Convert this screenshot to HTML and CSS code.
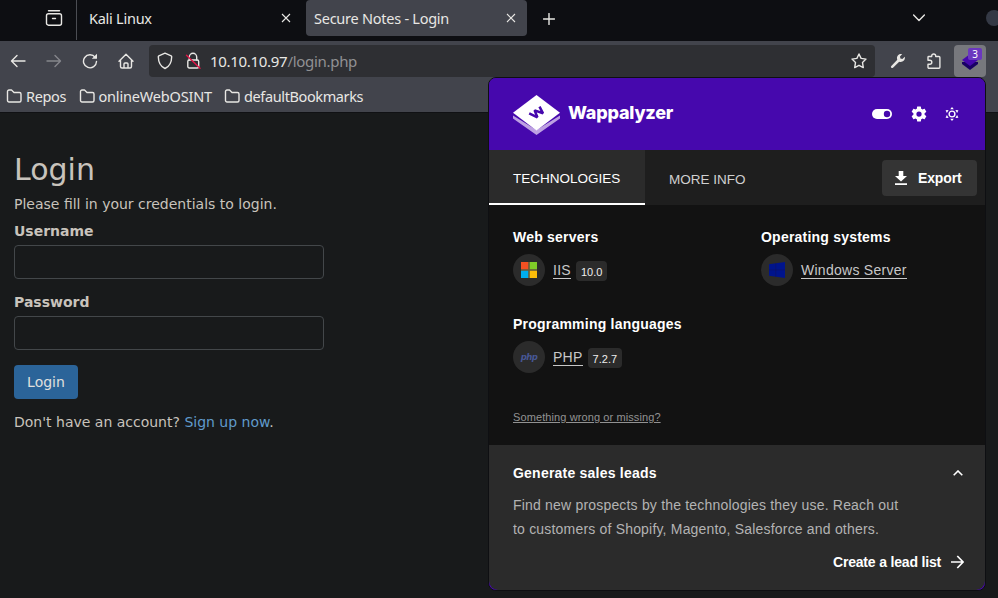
FILE: index.html
```html
<!DOCTYPE html>
<html lang="en">
<head>
<meta charset="utf-8">
<title>Secure Notes - Login</title>
<link rel="stylesheet" href="styles.css">
</head>
<body>
<div class="browser">
  <header class="tabs">
    <div class="view-button">
      <svg width="18" height="18" viewBox="0 0 18 18" class="line"><path d="M3.500 1.700h11"/><rect x="1.500" y="4.700" width="15" height="11.500" rx="2"/><path d="M7.500 9.500h3"/></svg>
    </div>
    <div class="tab tab-idle"><span class="tab-name">Kali Linux</span>
      <svg width="10" height="10" viewBox="0 0 10 10" class="thin"><path d="M1 1l8 8M9 1l-8 8"/></svg>
    </div>
    <div class="tab tab-active"><span class="tab-name">Secure Notes - Login</span>
      <svg width="10" height="10" viewBox="0 0 10 10" class="thin"><path d="M1 1l8 8M9 1l-8 8"/></svg>
    </div>
    <svg class="new-tab line" width="12" height="12" viewBox="0 0 12 12"><path d="M6 .5v11M.5 6h11"/></svg>
    <svg class="all-tabs line" width="12" height="8" viewBox="0 0 12 8"><path d="M.6 1l5.400 5.500L11.400 1"/></svg>
    <span class="window-dot"></span>
  </header>
  <nav class="toolbar">
    <div class="slot"><svg width="16" height="16" viewBox="0 0 16 16" class="line"><path d="M15 8H1.700M7 2.500L1.500 8 7 13.500"/></svg></div>
    <div class="slot dim"><svg width="16" height="16" viewBox="0 0 16 16" class="line"><path d="M1 8h13.300M9 2.500L14.500 8 9 13.500"/></svg></div>
    <div class="slot"><svg width="16" height="16" viewBox="0 0 16 16" class="line"><path d="M13.200 4.400A6.500 6.500 0 1 0 14.500 8.500"/><path d="M15 .8v5H9.800z" fill="currentColor" stroke="none"/></svg></div>
    <div class="slot"><svg width="16" height="16" viewBox="0 0 16 16" class="line"><path d="M1 8.200l7-7 7 7M2.500 7v6.500a1.500 1.500 0 0 0 1.500 1.500h8a1.500 1.500 0 0 0 1.500-1.500V7M6 15v-4a1 1 0 0 1 1-1h2a1 1 0 0 1 1 1v4"/></svg></div>
    <div class="urlbar">
      <svg width="16" height="18" viewBox="0 0 16 18" class="line"><path d="M8 1.200L14.200 3.800q.5.300.5.900C14.600 10.500 12.300 14.500 8 16.500 3.700 14.500 1.400 10.500 1.300 4.700q0-.6.5-.9z"/></svg>
      <svg class="lock line" width="16" height="18" viewBox="0 0 16 18"><path d="M4.300 8V5a3.700 3.700 0 0 1 7.400 0v3"/><rect x="2.800" y="8" width="10.900" height="8" rx="1.500"/><path class="strike" d="M1.500 3.200l13.500 13"/></svg>
      <span class="address"><b>10.10.10.97</b>/login.php</span>
      <svg class="star line" width="16" height="16" viewBox="0 0 16 16"><path d="M8 1l2.100 4.400 4.900.7-3.500 3.500.8 5L8 12.300l-4.300 2.300.8-5L1 6.100l4.900-.7z"/></svg>
    </div>
    <div class="slot wrench"><svg width="16" height="16" viewBox="0 0 16 16"><path d="M14.800 3.800l-2.400 2.100-2-.5-.4-2L12.200 1.100C9.500.3 6.700 2.300 7 5.400c0 .5.100.9.300 1.300L1.300 13a1.200 1.200 0 0 0 1.700 1.700l6.200-6c3 1 6.400-1.300 5.600-4.900z" fill="currentColor"/></svg></div>
    <div class="slot"><svg width="16" height="16" viewBox="0 0 16 16" class="line"><path d="M2 5V4.200a.7.700 0 0 1 .7-.7h3V3a2 2 0 0 1 4 0v.5h3.200a1 1 0 0 1 1 1v9.700a1 1 0 0 1-1 1H3a1 1 0 0 1-1-1v-3h1.800a1.700 1.700 0 0 0 0-4H2z"/></svg></div>
    <div class="extension">
      <svg width="18" height="18" viewBox="0 0 18 18"><path d="M1 10v2l8 6 8-6v-2z" fill="#190064"/><path d="M9 2l8 6-8 6-8-6z" fill="#4608ad"/></svg>
      <span class="count">3</span>
    </div>
  </nav>
  <div class="bookmarks">
    <div class="bookmark"><svg width="16" height="14" viewBox="0 0 16 14" class="line"><path d="M1.500 11.500v-9A1.500 1.500 0 0 1 3 1h2.500L8 3.500h5.500A1.500 1.500 0 0 1 15 5v6.500a1.500 1.500 0 0 1-1.500 1.500H3A1.500 1.500 0 0 1 1.500 11.500z"/></svg><span class="repos">Repos</span></div>
    <div class="bookmark"><svg width="16" height="14" viewBox="0 0 16 14" class="line"><path d="M1.500 11.500v-9A1.500 1.500 0 0 1 3 1h2.500L8 3.500h5.500A1.500 1.500 0 0 1 15 5v6.500a1.500 1.500 0 0 1-1.500 1.500H3A1.500 1.500 0 0 1 1.500 11.500z"/></svg><span class="osint">onlineWebOSINT</span></div>
    <div class="bookmark"><svg width="16" height="14" viewBox="0 0 16 14" class="line"><path d="M1.500 11.500v-9A1.500 1.500 0 0 1 3 1h2.500L8 3.500h5.500A1.500 1.500 0 0 1 15 5v6.500a1.500 1.500 0 0 1-1.500 1.500H3A1.500 1.500 0 0 1 1.500 11.500z"/></svg><span class="default">defaultBookmarks</span></div>
  </div>
</div>

<main class="login">
  <h2>Login</h2>
  <p class="intro">Please fill in your credentials to login.</p>
  <form>
    <label for="username">Username</label>
    <input id="username" type="text">
    <label for="password">Password</label>
    <input id="password" type="password">
    <button type="button">Login</button>
  </form>
  <p>Don't have an account? <a>Sign up now</a>.</p>
</main>

<aside class="popup">
  <div class="brand">
    <svg width="47" height="40" viewBox="0 0 47 40"><path d="M0 20.500v3L23.500 40 47 23.500v-3L23.500 35z" fill="#bda0e2"/><path d="M23.500 0L47 17.800 23.500 35.500 0 17.800z" fill="#fff"/><path d="M16.200 18.300L24.400 22.300 21.600 15.400 30 18.300 26.500 11.600" fill="none" stroke="#4608ad" stroke-width="2.500" stroke-linejoin="bevel"/></svg>
    <span class="brand-name">Wappalyzer</span>
    <svg class="toggle" width="20" height="10" viewBox="0 0 20 10"><rect width="20" height="10" rx="5" fill="#fff"/><circle cx="15" cy="5" r="3.200" fill="#4608ad"/></svg>
    <svg class="gear" width="18" height="18" viewBox="0 0 24 24"><path fill="#fff" d="M12 15.500A3.500 3.500 0 0 1 8.500 12 3.500 3.500 0 0 1 12 8.500a3.500 3.500 0 0 1 3.500 3.500 3.500 3.500 0 0 1-3.500 3.500m7.430-2.530c.04-.32.070-.64.070-.97s-.03-.66-.07-1l2.110-1.630c.19-.15.240-.42.120-.64l-2-3.460c-.12-.22-.39-.31-.61-.22l-2.490 1c-.52-.39-1.060-.73-1.690-.98l-.37-2.650A.506.506 0 0 0 14 2h-4c-.25 0-.46.180-.5.420l-.37 2.650c-.63.250-1.170.590-1.690.980l-2.490-1c-.22-.09-.49 0-.61.220l-2 3.460c-.13.220-.07.490.12.640L4.570 11c-.04.340-.07.670-.07 1s.03.650.07.970l-2.110 1.660c-.19.150-.25.420-.12.640l2 3.460c.12.220.39.300.61.220l2.490-1.010c.52.400 1.060.740 1.690.990l.37 2.650c.04.240.25.420.5.420h4c.25 0 .46-.18.500-.42l.37-2.650c.63-.26 1.170-.59 1.690-.99l2.490 1.010c.22.080.49 0 .61-.22l2-3.460c.12-.22.070-.49-.12-.64z"/></svg>
    <svg class="sun" width="14" height="14" viewBox="0 0 14 14"><circle cx="7" cy="7" r="2.900" fill="none" stroke="#fff" stroke-width="1.400"/><path fill="#fff" d="M7 0l1.800 2.200H5.200zM7 14l1.800-2.200H5.200zM.6 3.300l3-.2L1.900 6zM.6 10.700l3 .2L1.900 8zM13.400 3.300l-3-.2L12.100 6zM13.400 10.700l-3 .2L12.100 8z"/></svg>
  </div>
  <div class="sections">
    <div class="section current"><span>TECHNOLOGIES</span></div>
    <div class="section"><span>MORE INFO</span></div>
    <div class="export"><svg width="12" height="14" viewBox="0 0 12 14"><path fill="#fff" d="M3.700 0h4.600v5H12L6 10.500 0 5h3.700zM0 12.200h12V14H0z"/></svg><span>Export</span></div>
  </div>
  <div class="results">
    <div class="group">
      <h3>Web servers</h3>
      <div class="tech"><span class="logo"><svg width="16" height="16" viewBox="0 0 16 16"><path fill="#655b3b" d="M7 0h2v16H7zM0 7h16v2H0z"/><path fill="#f25022" d="M0 0h7.200v7.200H0z"/><path fill="#80cc28" d="M8.800 0H16v7.200H8.800z"/><path fill="#00adef" d="M0 8.800h7.200V16H0z"/><path fill="#fbbc09" d="M8.800 8.800H16V16H8.800z"/></svg></span><a>IIS</a><span class="version">10.0</span></div>
    </div>
    <div class="group">
      <h3>Operating systems</h3>
      <div class="tech"><span class="logo"><svg width="16" height="16" viewBox="0 0 16 16"><path fill="#00148c" d="M0 2.200L16 0v16L0 13.800z"/><path d="M6.700 1v14M0 7.900h16" stroke="#11145c" stroke-width=".5"/></svg></span><a>Windows Server</a></div>
    </div>
    <div class="group">
      <h3>Programming languages</h3>
      <div class="tech"><span class="logo"><i>php</i></span><a>PHP</a><span class="version">7.2.7</span></div>
    </div>
    <a class="feedback">Something wrong or missing?</a>
  </div>
  <div class="leads">
    <div class="leads-title"><h3>Generate sales leads</h3><svg width="10" height="6" viewBox="0 0 10 6"><path d="M.7 5.300L5 1l4.300 4.300" fill="none" stroke="#fff" stroke-width="1.600"/></svg></div>
    <p>Find new prospects by the technologies they use. Reach out<br>to customers of Shopify, Magento, Salesforce and others.</p>
    <div class="create"><span>Create a lead list</span><svg width="13" height="14" viewBox="0 0 13 14"><path d="M0 7h12M6.300 1l5.800 6-5.800 6" fill="none" stroke="#fff" stroke-width="1.700"/></svg></div>
  </div>
</aside>
</body>
</html>
```
FILE: styles.css
```css
* { box-sizing: border-box; }
body { margin: 0; width: 998px; height: 598px; overflow: hidden; background: #181a1b; color: #c8c3bc; font: 14px/20px "DejaVu Sans", sans-serif; }
svg { display: block; flex: none; }
.browser { color: #e8e7e4; font-family: "Noto Sans", sans-serif; font-size: 14.5px; }
.line { fill: none; stroke: currentColor; stroke-width: 1.4; stroke-linecap: round; stroke-linejoin: round; }
.thin { fill: none; stroke: currentColor; stroke-width: 1.1; }
span, a, h2, h3 { white-space: nowrap; }

.tabs { display: flex; height: 41px; overflow: hidden; background: #0d0e12; }
.tabs > * { flex: none; }
.view-button { width: 77px; height: 40px; padding: 9px 0 0 45px; border-right: 1px solid #4b4d53; }
.tab { display: flex; align-items: center; justify-content: space-between; height: 36px; }
.tab-name { letter-spacing: -.25px; }
.tab-idle { width: 229px; padding: 0 15px 0 12px; }
.tab-active { width: 221px; padding: 0 11px 0 8px; background: #42444c; border-radius: 4px; }
.new-tab { margin: 13px 0 0 15.500px; }
.all-tabs { margin: 14px 0 0 358.500px; }
.window-dot { width: 16px; height: 16px; margin: 10px 0 0 61px; border-radius: 50%; background: #343945; }

.toolbar { display: flex; height: 40px; padding-top: 4px; background: #42444c; }
.slot { display: flex; align-items: center; justify-content: center; width: 36px; height: 32px; flex: none; }
.dim { color: #85868b; }
.urlbar { display: flex; align-items: center; width: 726px; height: 32px; margin-left: 5px; padding: 0 8px; border-radius: 4px; background: #2e2f33; }
.lock { margin-left: 12px; }
.strike { stroke: #e31547; }
.address { margin-left: 9px; color: #919193; font-size: 15px; letter-spacing: -.3px; }
.address b { color: #e8e7e4; font-weight: 400; }
.star { margin-left: auto; }
.wrench { margin-left: 5px; }
.extension { position: relative; width: 32px; height: 32px; margin-left: 2px; padding: 7px; border-radius: 4px; background: #77787d; }
.count { position: absolute; top: 3px; left: 14px; width: 14px; height: 12px; border-radius: 2px; background: #6b37bf; color: #fff; font-size: 10px; line-height: 12px; text-align: center; }

.bookmarks { display: flex; gap: 13px; height: 32px; padding-left: 6px; background: #42444c; border-bottom: 1px solid #101114; }
.bookmark { display: flex; align-items: center; gap: 4px; height: 30px; }
.repos { width: 39.500px; letter-spacing: -.35px; }
.osint { width: 112.500px; letter-spacing: -.18px; }
.default { letter-spacing: -.38px; }

.login { width: 338px; padding: 40px 14px 0; }
.login h2 { margin: 0 0 8px; font-size: 30px; font-weight: 400; line-height: 33px; }
.login p { margin: 0; }
.login .intro { margin-bottom: 7px; }
.login label { display: block; margin-bottom: 4px; font-weight: 700; }
.login input { display: block; width: 310px; height: 34px; margin-bottom: 13px; border: 1px solid #43474a; border-radius: 4px; background: #181a1b; }
.login button { display: block; width: 64px; height: 34px; margin: 15px 0 13px; padding: 0; border: 0; border-radius: 4px; background: #2b6499; color: #e0e0df; font: 14px/20px "DejaVu Sans", sans-serif; }
.login p a { color: #609bcb; }

.popup { position: absolute; top: 77px; left: 488px; width: 498px; height: 514px; overflow: hidden; border: 1px solid #0e0f12; border-radius: 8px; background: #4608ad; color: #fff; font: 14px/20px "Liberation Sans", sans-serif; }
.brand { display: flex; height: 72px; padding: 17px 0 0 24px; background: #4608ad; }
.brand-name { width: 105px; margin: 7px 0 0 8px; font: 800 18px/22px "Inter", sans-serif; letter-spacing: -.2px; }
.toggle { margin: 14px 0 0 199px; }
.gear { margin: 10px 0 0 18px; }
.sun { margin: 12px 0 0 17px; }
.sections { display: flex; height: 55px; background: #1e1e1e; }
.section { height: 55px; padding: 20px 24px 0; color: #d0d0d0; font-size: 13.5px; }
.current { width: 156px; padding-top: 19px; background: #2b2b2b; border-bottom: 2px solid #fff; color: #fff; }
.export { display: flex; align-items: center; gap: 11px; width: 95px; height: 36px; margin: 10px 8px 0 auto; padding-left: 13px; border-radius: 4px; background: #343434; font-weight: 700; letter-spacing: -.15px; }
.results { display: grid; grid-template-columns: 248px 1fr; grid-template-rows: 87px 87px 1fr; height: 240px; padding: 22px 0 0 24px; background: #121212; }
.popup h3 { margin: 0; font-size: 14px; line-height: 20px; font-weight: 700; letter-spacing: .22px; }
.tech { display: flex; align-items: center; height: 32px; margin-top: 7px; color: #c8c8c8; letter-spacing: .27px; }
.tech a { height: 17px; border-bottom: 1px solid #c8c8c8; line-height: 17px; }
.logo { display: grid; place-items: center; width: 32px; height: 32px; margin-right: 8px; border-radius: 50%; background: #2b2b2b; }
.logo i { color: #475795; font: italic bold 8.5px/12px "DejaVu Sans", sans-serif; letter-spacing: -.5px; }
.version { height: 20px; margin: 2px 0 0 5px; padding: 1px 5px 0; border-radius: 4px; background: #2b2b2b; color: #eee; font-size: 11px; line-height: 20px; letter-spacing: 0; }
.feedback { grid-column: 1; grid-row: 3; margin-top: 6px; color: #929292; font-size: 11px; line-height: 20px; letter-spacing: .1px; text-decoration: underline; }
.leads { height: 145px; padding: 18px 21px 0 24px; border-radius: 0 0 9px 9px; background: #2b2b2b; }
.leads-title { display: flex; align-items: center; justify-content: space-between; padding-right: 1px; }
.leads p { margin: 10px 0 0; color: #b3b3b3; line-height: 24px; letter-spacing: .19px; white-space: nowrap; }
.create { display: flex; align-items: center; justify-content: flex-end; gap: 10px; margin-top: 11px; font-weight: 700; letter-spacing: -.18px; }
```
